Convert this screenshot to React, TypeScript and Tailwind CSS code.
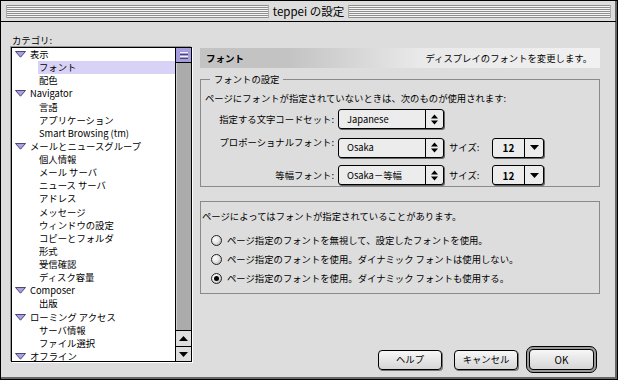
const tree = [
  { t: '表示', top: true },
  { t: 'フォント', sel: true },
  { t: '配色' },
  { t: 'Navigator', top: true },
  { t: '言語' },
  { t: 'アプリケーション' },
  { t: 'Smart Browsing (tm)' },
  { t: 'メールとニュースグループ', top: true },
  { t: '個人情報' },
  { t: 'メール サーバ' },
  { t: 'ニュース サーバ' },
  { t: 'アドレス' },
  { t: 'メッセージ' },
  { t: 'ウィンドウの設定' },
  { t: 'コピーとフォルダ' },
  { t: '形式' },
  { t: '受信確認' },
  { t: 'ディスク容量' },
  { t: 'Composer', top: true },
  { t: '出版' },
  { t: 'ローミング アクセス', top: true },
  { t: 'サーバ情報' },
  { t: 'ファイル選択' },
  { t: 'オフライン', top: true },
]

const Tri = () => (
  <svg width="11" height="7" viewBox="0 0 11 7">
    <polygon points="0.5,0.5 10.5,0.5 5.5,6.2" fill="#a99fe2" stroke="#4b4770" strokeWidth="1" />
  </svg>
)

const UpDown = () => (
  <svg width="7" height="11" viewBox="0 0 7 11">
    <polygon points="3.5,0.5 7,4.5 0,4.5" fill="#000" />
    <polygon points="0,6.5 7,6.5 3.5,10.5" fill="#000" />
  </svg>
)

const Down = () => (
  <svg width="9" height="5" viewBox="0 0 9 5">
    <polygon points="0,0 9,0 4.5,5" fill="#000" />
  </svg>
)

const Popup = ({ label }: { label: string }) => (
  <div className="flex h-[20px] w-[106px] rounded-[3px] border border-black bg-[#ececec] shadow-[1px_1px_0_#666]">
    <span className="flex-1 flex items-center pl-[8px]">{label}</span>
    <span className="w-[18px] border-l border-black flex items-center justify-center">
      <UpDown />
    </span>
  </div>
)

const SizePopup = () => (
  <div className="flex h-[20px] w-[52px] rounded-[3px] border border-black bg-[#ececec] shadow-[1px_1px_0_#666]">
    <span className="w-[31px] flex items-center justify-center font-bold text-[10px]">12</span>
    <span className="flex-1 border-l border-black flex items-center justify-center">
      <Down />
    </span>
  </div>
)

const Radio = ({ on }: { on?: boolean }) => (
  <span className="w-[11px] h-[11px] rounded-full border border-[#222] bg-[radial-gradient(circle_at_35%_35%,#ffffff_0%,#e6e6e6_45%,#a4a4a4_100%)] flex items-center justify-center">
    {on && <span className="w-[5px] h-[5px] rounded-full bg-black"></span>}
  </span>
)

const Stripes = () => (
  <div className="flex-1 h-[13px] bg-[repeating-linear-gradient(to_bottom,#8e8e8e_0px,#8e8e8e_1px,#f6f6f6_1px,#f6f6f6_2px)] border-x border-[#aaa]"></div>
)

export default function App() {
  return (
    <div className="w-[618px] h-[380px] bg-[#dddddd] border border-black shadow-[inset_-2px_-2px_0_#666] flex flex-col font-['Noto_Sans_CJK_JP','Noto_Sans',sans-serif] text-[9.35px] text-black leading-[13px]">
      {/* title bar */}
      <div className="h-[21px] flex-shrink-0 border-b border-black flex items-center gap-[3px] px-[5px] mr-[1px]">
        <Stripes />
        <span className="text-[11.5px] px-[1px]">teppei の設定</span>
        <Stripes />
      </div>

      <div className="flex-1 flex pl-[10px]">
        {/* left: categories */}
        <div className="w-[181px] pt-[12px] flex flex-col">
          <div className="h-[13px] pl-[1px]">カテゴリ:</div>
          <div className="h-[315px] flex border border-black shadow-[-1px_-1px_0_#999,1px_1px_0_#fff]">
            <div className="flex-1 bg-white overflow-hidden">
              {tree.map((row) => (
                <div key={row.t} className="h-[13.13px] flex items-center whitespace-nowrap">
                  {row.top ? (
                    <>
                      <span className="w-[18px] pl-[3px] flex items-center"><Tri /></span>
                      <span>{row.t}</span>
                    </>
                  ) : (
                    <span className={`ml-[26px] flex-1 h-full flex items-center pl-[1px] ${row.sel ? 'bg-[#d8d2f6]' : ''}`}>{row.t}</span>
                  )}
                </div>
              ))}
            </div>
            <div className="w-[16px] border-l border-black flex flex-col bg-[#ababab] shadow-[inset_1px_0_0_#cfcfcf]">
              <div className="h-[15px] border-b border-black bg-[#a69ddc] flex flex-col items-center justify-center gap-[1px]">
                <span className="w-[8px] h-[1px] bg-[#f0eeff]"></span>
                <span className="w-[8px] h-[1px] bg-[#4b4770]"></span>
                <span className="w-[8px] h-[1px] bg-[#f0eeff]"></span>
                <span className="w-[8px] h-[1px] bg-[#4b4770]"></span>
              </div>
              <div className="flex-1"></div>
              <div className="h-[16px] border-t border-black bg-[#dedede] flex items-center justify-center">
                <svg width="9" height="5" viewBox="0 0 9 5"><polygon points="4.5,0 9,5 0,5" fill="#000" /></svg>
              </div>
              <div className="h-[15px] border-t border-black bg-[#dedede] flex items-center justify-center">
                <Down />
              </div>
            </div>
          </div>
        </div>

        {/* right: settings */}
        <div className="w-[400px] ml-[8px] pt-[26px] flex flex-col">
          <div className="h-[20px] flex items-center justify-between px-[6px] pr-[8px] bg-[linear-gradient(to_right,#c3c3c3_0%,#c3c3c3_22%,#e9e9e9_55%,#f1f1f1_100%)]">
            <span className="font-bold text-[9.5px]">フォント</span>
            <span>ディスプレイのフォントを変更します。</span>
          </div>

          <fieldset className="mt-[5px] border border-[#8a8a8a] px-[1px] pb-[1px]">
            <legend className="ml-[8px] px-[4px] leading-[13px]">フォントの設定</legend>
            <div className="pt-[6px] pl-[3px]">ページにフォントが指定されていないときは、次のものが使用されます:</div>
            <div className="mt-[4px] flex items-center">
              <span className="w-[136px] text-right pr-[4px]">指定する文字コードセット:</span>
              <Popup label="Japanese" />
            </div>
            <div className="mt-[7px] flex items-center">
              <span className="w-[136px] text-right pr-[4px] mb-[10px]">プロポーショナルフォント:</span>
              <Popup label="Osaka" />
              <span className="ml-[5px] w-[43px]">サイズ:</span>
              <SizePopup />
            </div>
            <div className="mt-[6px] flex items-center">
              <span className="w-[136px] text-right pr-[4px]">等幅フォント:</span>
              <Popup label="Osaka－等幅" />
              <span className="ml-[5px] w-[43px]">サイズ:</span>
              <SizePopup />
            </div>
          </fieldset>

          <fieldset className="mt-[14px] border border-[#8a8a8a] px-[1px] pb-[5px]">
            <div className="pt-[8px]">ページによってはフォントが指定されていることがあります。</div>
            <div className="mt-[8px] flex flex-col pl-[9px]">
              <label className="h-[19px] flex items-center gap-[5px]"><Radio /><span>ページ指定のフォントを無視して、設定したフォントを使用。</span></label>
              <label className="h-[19px] flex items-center gap-[5px]"><Radio /><span>ページ指定のフォントを使用。ダイナミック フォントは使用しない。</span></label>
              <label className="h-[19px] flex items-center gap-[5px]"><Radio on /><span>ページ指定のフォントを使用。ダイナミック フォントも使用する。</span></label>
            </div>
          </fieldset>

          <div className="mt-[52px] flex items-center justify-end pr-[3px]">
            <button className="w-[64px] h-[20px] rounded-[4px] border border-black bg-[linear-gradient(to_bottom,#f7f7f7,#d6d6d6)] shadow-[1px_1px_0_#777]">ヘルプ</button>
            <button className="ml-[12px] w-[64px] h-[20px] rounded-[4px] border border-black bg-[linear-gradient(to_bottom,#f7f7f7,#d6d6d6)] shadow-[1px_1px_0_#777]">キャンセル</button>
            <div className="ml-[8px] w-[71px] h-[27px] rounded-[7px] border border-black bg-[#9a9a9a] p-[2px] flex">
              <button className="flex-1 rounded-[4px] border border-black bg-[linear-gradient(to_bottom,#f7f7f7,#d6d6d6)] text-[10px]">OK</button>
            </div>
          </div>
        </div>
      </div>
    </div>
  )
}
